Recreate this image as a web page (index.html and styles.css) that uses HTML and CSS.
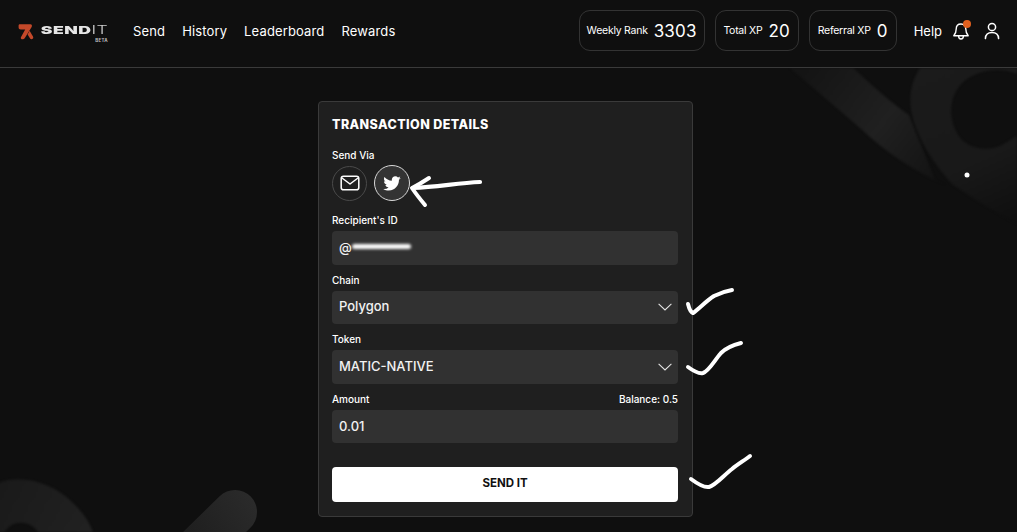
FILE: index.html
```html
<!DOCTYPE html>
<html lang="en">
<head>
<meta charset="utf-8">
<title>SendIt</title>
<link rel="stylesheet" href="styles.css">
</head>
<body>
<svg class="backdrop" width="1017" height="532" viewBox="0 0 1017 532" aria-hidden="true">
  <defs>
    <linearGradient id="fade" x1="800" y1="75" x2="950" y2="190" gradientUnits="userSpaceOnUse">
      <stop offset="0" stop-color="#141414"/>
      <stop offset="0.5" stop-color="#202020"/>
      <stop offset="1" stop-color="#101010"/>
    </linearGradient>
    <linearGradient id="loop" x1="930" y1="70" x2="1000" y2="225" gradientUnits="userSpaceOnUse">
      <stop offset="0" stop-color="#1b1b1b"/>
      <stop offset="0.6" stop-color="#191919"/>
      <stop offset="1" stop-color="#0f0f0f"/>
    </linearGradient>
    <linearGradient id="low" x1="0" y1="480" x2="100" y2="532" gradientUnits="userSpaceOnUse">
      <stop offset="0" stop-color="#1a1a1a"/>
      <stop offset="1" stop-color="#222222"/>
    </linearGradient>
    <linearGradient id="cap" x1="250" y1="490" x2="190" y2="532" gradientUnits="userSpaceOnUse">
      <stop offset="0" stop-color="#2b2b2b"/>
      <stop offset="1" stop-color="#1f1f1f"/>
    </linearGradient>
  </defs>
  <path class="soft" fill="url(#fade)" d="M790 68 L853 68 C872 85 890 102 909 115 L935 180 L948 186 C915 172 885 152 860 128 Z"/>
  <path class="soft" fill="url(#loop)" fill-rule="evenodd" d="M920 68 C912 80 908 95 912 115 C918 140 935 165 952 184 C975 200 995 212 1017 224 L1017 68 Z M1017 74 C1000 66 970 70 958 88 C948 102 950 122 958 135 C966 148 985 152 1000 146 L1017 136 Z"/>
  <path class="soft" fill="url(#low)" fill-rule="evenodd" d="M-10 488 C10 472 50 478 75 505 C85 515 90 524 93 532 L38 532 C32 522 18 520 10 526 L4 532 L-10 532 Z"/>
  <line x1="235" y1="512" x2="190" y2="556" stroke="url(#cap)" stroke-width="44" stroke-linecap="round"/>
  <circle class="dot" cx="967" cy="175" r="2.5"/>
</svg>

<header class="topbar">
  <div class="logo">
    <svg class="logo-mark" width="16" height="16" viewBox="0 0 16 16" aria-hidden="true">
      <path fill="#c4492a" d="M.6 1.6 C.6.7 1.2.2 2 .2 L12.4.2 C14 .2 14.4 1.8 13.5 3.2 L7 13.8 C6 15.4 3.9 15.8 3.1 14.8 C2.6 14.2 2.8 13.4 3.2 12.7 L7.2 5.6 L2.8 5.6 C1.4 5.6.6 4.8.6 3.6 Z"/>
      <path fill="#c4492a" d="M11.6 6.8 L15 12.6 C15.6 13.8 15.2 15 13.8 15.2 C12.8 15.3 12.2 14.8 11.8 14 L9.6 10.4 Z"/>
    </svg>
    <div class="logo-text">
      <span class="logo-name"><b>SEND</b>IT</span>
      <span class="logo-beta">BETA</span>
    </div>
  </div>
  <nav class="nav">
    <a>Send</a><a>History</a><a>Leaderboard</a><a>Rewards</a>
  </nav>
  <div class="stats">
    <div class="stat stat-rank"><span class="stat-label">Weekly Rank</span><span class="stat-value">3303</span></div>
    <div class="stat stat-xp"><span class="stat-label">Total XP</span><span class="stat-value">20</span></div>
    <div class="stat stat-ref"><span class="stat-label">Referral XP</span><span class="stat-value">0</span></div>
  </div>
  <a class="help">Help</a>
  <div class="bell">
    <svg width="19" height="20" viewBox="0 0 19 20" fill="none" stroke="#fff" stroke-width="1.4" stroke-linecap="round" stroke-linejoin="round" aria-hidden="true">
      <path d="M9 3 C5.8 3 4.2 5.4 4.2 8 C4.2 11.4 3.4 13 1.8 14.8 L16.2 14.8 C14.6 13 13.8 11.4 13.8 8 C13.8 5.4 12.2 3 9 3 Z"/>
      <path d="M6.6 15 C6.6 17 7.6 18 9 18 C10.4 18 11.4 17 11.4 15"/>
    </svg>
    <span class="bell-dot"></span>
  </div>
  <svg class="user" width="16" height="18" viewBox="0 0 16 18" fill="none" stroke="#fff" stroke-width="1.5" stroke-linecap="round" aria-hidden="true">
    <circle cx="8" cy="5" r="3.6"/>
    <path d="M1.4 16.6 C1.6 12.6 4.4 10.6 8 10.6 C11.6 10.6 14.4 12.6 14.6 16.6"/>
  </svg>
</header>

<main class="content">
  <section class="card">
    <h1 class="card-title">TRANSACTION DETAILS</h1>
    <div class="via">
      <span class="label">Send Via</span>
      <div class="via-icons">
        <span class="via-btn">
          <svg width="20" height="16" viewBox="0 0 20 16" fill="none" stroke="#fff" stroke-width="1.5" stroke-linejoin="round" aria-hidden="true">
            <rect x="1.2" y="1.2" width="17.6" height="13.6" rx="2.4"/>
            <path d="M2 3 L10 9 L18 3"/>
          </svg>
        </span>
        <span class="via-btn via-active">
          <svg width="20" height="20" viewBox="0 0 24 24" fill="#fff" aria-hidden="true">
            <path d="M22.46 6c-.77.35-1.6.58-2.46.69.88-.53 1.56-1.37 1.88-2.38-.83.5-1.75.85-2.72 1.05C18.37 4.5 17.26 4 16 4c-2.35 0-4.27 1.92-4.27 4.29 0 .34.04.67.11.98C8.28 9.09 5.11 7.38 3 4.79c-.37.63-.58 1.37-.58 2.15 0 1.49.75 2.81 1.91 3.56-.71 0-1.37-.2-1.95-.5v.03c0 2.08 1.48 3.82 3.44 4.21a4.22 4.22 0 0 1-1.93.07 4.28 4.28 0 0 0 4 2.98 8.521 8.521 0 0 1-5.33 1.84c-.34 0-.68-.02-1.02-.06C3.44 20.29 5.7 21 8.12 21 16 21 20.33 14.46 20.33 8.79c0-.19 0-.37-.01-.56.84-.6 1.56-1.36 2.14-2.23z"/>
          </svg>
        </span>
      </div>
    </div>
    <div class="field">
      <span class="label">Recipient's ID</span>
      <div class="control"><span>@</span><span class="redact"></span></div>
    </div>
    <div class="field">
      <span class="label">Chain</span>
      <div class="control"><span>Polygon</span><svg class="chev" width="14" height="8" viewBox="0 0 14 8" fill="none" stroke="#e4e4e4" stroke-width="1.1" aria-hidden="true"><path d="M.6.8 L7 7 L13.4.8"/></svg></div>
    </div>
    <div class="field">
      <span class="label">Token</span>
      <div class="control"><span>MATIC-NATIVE</span><svg class="chev" width="14" height="8" viewBox="0 0 14 8" fill="none" stroke="#e4e4e4" stroke-width="1.1" aria-hidden="true"><path d="M.6.8 L7 7 L13.4.8"/></svg></div>
    </div>
    <div class="field">
      <div class="label-row"><span class="label">Amount</span><span class="label">Balance: 0.5</span></div>
      <div class="control"><span>0.01</span></div>
    </div>
    <button class="send" type="button">SEND IT</button>
  </section>
</main>

<svg class="marks" width="1017" height="532" viewBox="0 0 1017 532" fill="none" stroke="#fff" stroke-linecap="round" stroke-linejoin="round" aria-hidden="true">
  <path stroke-width="4.2" d="M480 182 C458 183 437 187 413 188"/>
  <path stroke-width="4" d="M429 178 C423 182 418 185 412 188 C416 194 420 199 425 205"/>
  <path stroke-width="4" d="M688 304 C689 308 690 312 693 313 C700 308 706 301 714 296 C720 293 726 291 732 290"/>
  <path stroke-width="4" d="M688 367 C692 370 698 374 703 373 C709 371 714 361 721 353 C727 347 733 345 741 343"/>
  <path stroke-width="4" d="M691 479 C695 482 703 488 709 487 C716 485 724 475 732 469 C738 464 745 460 750 456"/>
</svg>
</body>
</html>
```
FILE: styles.css
```css
* { box-sizing: border-box; }
html, body { margin: 0; padding: 0; }
body {
  position: relative;
  width: 1017px;
  height: 532px;
  overflow: hidden;
  background: #0f0f0f;
  color: #fff;
  font-family: Inter, "Noto Sans", "Liberation Sans", sans-serif;
}
.backdrop, .marks { position: absolute; left: 0; top: 0; }
.marks { pointer-events: none; z-index: 3; }
.dot { fill: #fff; }
.soft { filter: blur(.8px); }

.topbar {
  position: relative;
  z-index: 1;
  display: flex;
  align-items: center;
  height: 68px;
  padding: 0 17px 6px 18px;
  border-bottom: 1px solid #3a3a3a;
  background: #0f0f0f;
}
.logo { display: flex; align-items: flex-start; gap: 5px; width: 115px; padding-top: 5px; }
.logo-mark { flex: none; }
.logo-text { display: flex; flex-direction: column; align-items: flex-end; width: 69px; }
.logo-name {
  display: inline-block;
  font-size: 11px;
  line-height: 13px;
  letter-spacing: .3px;
  color: #cfcfcf;
  font-weight: 300;
  white-space: nowrap;
  transform: scaleX(1.6);
  transform-origin: right center;
}
.logo-name b { font-weight: 900; letter-spacing: .3px; color: #e6e6e6; }
.logo-beta { font-size: 4.5px; line-height: 5px; font-weight: 700; color: #bbb; letter-spacing: .3px; margin-top: 1px; }

.nav { display: flex; gap: 17px; font-size: 13px; font-weight: 400; letter-spacing: .14px; color: #fff; }
.stats { display: flex; gap: 10px; margin-left: auto; }
.stat {
  display: flex;
  align-items: center;
  justify-content: center;
  gap: 6px;
  height: 41px;
  border: 1px solid #333;
  border-radius: 11px;
}
.stat-rank { width: 126px; }
.stat-xp { width: 84px; }
.stat-ref { width: 88px; }
.stat-label { font-size: 10.5px; letter-spacing: -.25px; font-weight: 400; }
.stat-value { font-size: 17px; font-weight: 400; letter-spacing: .2px; }
.help { margin-left: 17px; font-size: 13px; }
.bell { position: relative; width: 19px; height: 20px; margin-left: 10px; }
.bell svg { display: block; }
.bell-dot {
  position: absolute;
  right: 0;
  top: -1px;
  width: 8px;
  height: 8px;
  border-radius: 50%;
  background: #e0601f;
}
.user { margin-left: 13px; }

.content { position: relative; z-index: 1; display: flex; justify-content: center; padding-top: 33px; padding-right: 6px; }
.card {
  width: 375px;
  height: 416px;
  padding: 0 14px 0 13px;
  background: #1f1f1f;
  border: 1px solid #3a3a3a;
  border-radius: 4px;
}
.card-title { margin: 15px 0 0; font-size: 12.5px; line-height: 16px; font-weight: 800; letter-spacing: .42px; }
.label { font-size: 10px; line-height: 14px; font-weight: 500; color: #fff; }
.via { margin-top: 10px; margin-bottom: 12px; }
.via-icons { display: flex; align-items: center; gap: 7px; margin-top: 2px; }
.via-btn {
  display: flex;
  align-items: center;
  justify-content: center;
  width: 35px;
  height: 35px;
  border: 1px solid #4a4a4a;
  border-radius: 50%;
}
.via-active { width: 36px; height: 36px; border-color: #d8d8d8; background: #333; }
.field { display: flex; flex-direction: column; gap: 4px; margin-top: 8px; }
.label-row { display: flex; justify-content: space-between; }
.control {
  display: flex;
  align-items: center;
  justify-content: space-between;
  height: 33.6px;
  padding: 0 6px 2px 7px;
  background: #313131;
  border-radius: 4px;
  font-size: 13px;
  font-weight: 500;
  color: #f2f2f2;
}
.control:has(.redact) { justify-content: flex-start; }
.redact {
  width: 59px;
  height: 5px;
  background: #fff;
  border-radius: 3px;
  filter: blur(1.4px);
}
.chev { margin-top: 2px; }
.send {
  display: block;
  width: 100%;
  height: 35px;
  margin-top: 24px;
  padding: 0 0 3px;
  border: 0;
  border-radius: 4px;
  background: #fff;
  color: #111;
  font-family: inherit;
  font-size: 11.5px;
  font-weight: 700;
}
```
